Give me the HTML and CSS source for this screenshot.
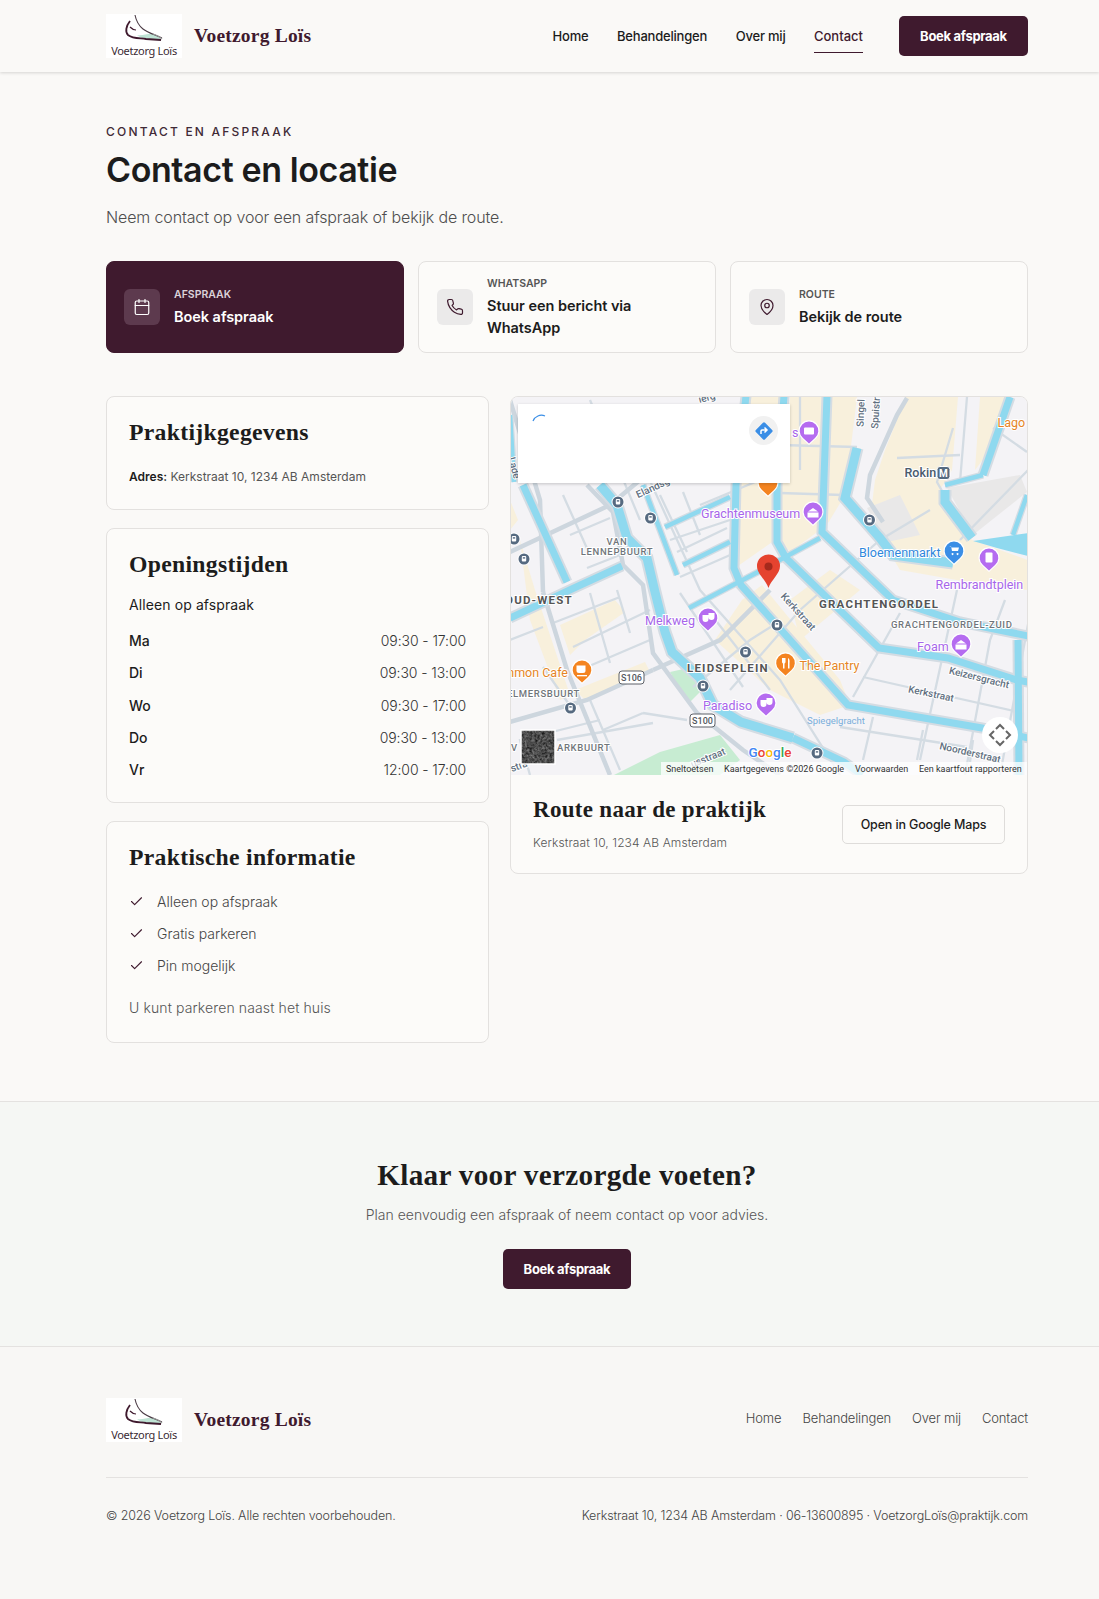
FILE: index.html
```html
<!DOCTYPE html>
<html lang="nl">
<head>
  <meta charset="UTF-8">
  <title>Contact - Voetzorg Loïs</title>
  <link rel="stylesheet" href="styles.css">
</head>
<body>

  <svg class="defs" width="0" height="0">
    <defs>
      <g id="logo-foot">
        <path d="M31 21C37 22 42 19 47 20C51 21 54 24 55 25C47 26 37 26 31 21Z" fill="#bfe3d4"/>
        <path d="M29 1C30 6 32 11 37 15C42 19 50 21 56 24" fill="none" stroke="#4a3a44" stroke-width="1.100"/>
        <path d="M24 7C20 12 19 18 22 21C27 25 34 24 40 25L55 26" fill="none" stroke="#3f1a2e" stroke-width="1.800"/>
        <path d="M24 13C26 15 28 16 30 16" fill="none" stroke="#3f1a2e" stroke-width="1.200"/>
        <path d="M47 20C51 21 54 23 56 25" fill="none" stroke="#999" stroke-width="1.200"/>
      </g>
      <g id="pin">
        <path d="M0 14L-7 7.500A10.500 10.500 0 1 1 7 7.500Z" fill="#fff"/>
        <path d="M0 12.500L-6 7A9.300 9.300 0 1 1 6 7Z" fill="currentColor"/>
      </g>
      <g id="stop">
        <circle r="6.500" fill="#fff"/>
        <circle r="5.500" fill="#566a80"/>
        <rect x="-2.200" y="-3" width="4.400" height="5.500" rx="1" fill="#fff"/>
        <rect x="-1.200" y="-1.800" width="2.400" height="1.400" fill="#566a80"/>
      </g>
      <g id="canals-wide">
        <path d="M827 396L822 532L893 600L960 622L1028 636"/>
        <path d="M784 396L777 485V542L786 558L879 648L948 658L1017 680L1028 682"/>
        <path d="M746 396L736 485L734 568L741 585L848 705L982 728L1028 738"/>
        <path d="M523 485L567 582"/>
        <path d="M510 618L574 588L622 566"/>
        <path d="M1018 640L1019 775"/>
        <path d="M793 738L844 762L862 775"/>
        <path d="M1010 397L983 475"/>
      </g>
      <g id="canals-broad">
        <path d="M600 485L617 505L627 538L647 558L655 592L665 632L672 652L700 678L713 705L741 722L793 738"/>
        <path d="M857 448L845 498L880 538L893 555L953 563"/>
        <path d="M945 490L945 502L972 538"/>
      </g>
      <g id="canals-thin">
        <path d="M510 415L514 482"/>
        <path d="M665 527L730 497"/>
        <path d="M683 565L730 542"/>
        <path d="M689 608L758 572L820 538"/>
        <path d="M643 485L677 575"/>
        <path d="M983 475L945 485"/>
        <path d="M1027 495L1013 535"/>
      </g>
      <filter id="sat-noise" x="0" y="0" width="100%" height="100%" color-interpolation-filters="sRGB">
        <feTurbulence type="fractalNoise" baseFrequency="0.4" numOctaves="2" seed="4"/>
        <feColorMatrix type="matrix" values="0.6 0 0 0 0  0.6 0 0 0 0  0.6 0 0 0 0  0 0 0 0 1"/>
      </filter>
    </defs>
  </svg>

  <!-- Header -->
  <header class="site-header">
    <div class="wrap header-row">
      <a class="brand" href="#">
        <span class="logo">
          <svg width="76" height="30" viewBox="0 0 76 30"><use href="#logo-foot"/></svg>
          <span class="logo-text">Voetzorg Loïs</span>
        </span>
        <span class="brand-name">Voetzorg Loïs</span>
      </a>
      <nav class="main-nav">
        <a href="#">Home</a>
        <a href="#">Behandelingen</a>
        <a href="#">Over mij</a>
        <a href="#" class="active">Contact</a>
      </nav>
      <a class="btn-primary" href="#">Boek afspraak</a>
    </div>
  </header>

  <!-- Main Content -->
  <main class="wrap page-main">
    <p class="eyebrow">CONTACT EN AFSPRAAK</p>
    <h1>Contact en locatie</h1>
    <p class="lead">Neem contact op voor een afspraak of bekijk de route.</p>

    <div class="actions">
      <a class="action action-dark" href="#">
        <span class="action-icon">
          <svg viewBox="0 0 24 24"><path d="M8 2v4"/><path d="M16 2v4"/><rect width="18" height="18" x="3" y="4" rx="2"/><path d="M3 10h18"/></svg>
        </span>
        <span class="action-text">
          <span class="action-label">AFSPRAAK</span>
          <span class="action-title">Boek afspraak</span>
        </span>
      </a>
      <a class="action" href="#">
        <span class="action-icon">
          <svg viewBox="0 0 24 24"><path d="M22 16.920v3a2 2 0 0 1-2.180 2 19.790 19.790 0 0 1-8.630-3.070 19.500 19.500 0 0 1-6-6 19.790 19.790 0 0 1-3.070-8.670A2 2 0 0 1 4.110 2h3a2 2 0 0 1 2 1.720 12.840 12.840 0 0 0 .7 2.810 2 2 0 0 1-.45 2.110L8.090 9.910a16 16 0 0 0 6 6l1.270-1.270a2 2 0 0 1 2.110-.45 12.840 12.840 0 0 0 2.810.7A2 2 0 0 1 22 16.920z"/></svg>
        </span>
        <span class="action-text">
          <span class="action-label">WHATSAPP</span>
          <span class="action-title">Stuur een bericht via WhatsApp</span>
        </span>
      </a>
      <a class="action" href="#">
        <span class="action-icon">
          <svg viewBox="0 0 24 24"><path d="M20 10c0 6-8 12-8 12s-8-6-8-12a8 8 0 0 1 16 0Z"/><circle cx="12" cy="10" r="3"/></svg>
        </span>
        <span class="action-text">
          <span class="action-label">ROUTE</span>
          <span class="action-title">Bekijk de route</span>
        </span>
      </a>
    </div>

    <div class="contact-grid">
      <div class="info-column">
        <section class="card">
          <h2>Praktijkgegevens</h2>
          <p class="address"><strong>Adres:</strong> Kerkstraat 10, 1234 AB Amsterdam</p>
        </section>

        <section class="card">
          <h2>Openingstijden</h2>
          <p class="hours-note">Alleen op afspraak</p>
          <ul class="hours">
            <li><span>Ma</span><span>09:30 - 17:00</span></li>
            <li><span>Di</span><span>09:30 - 13:00</span></li>
            <li><span>Wo</span><span>09:30 - 17:00</span></li>
            <li><span>Do</span><span>09:30 - 13:00</span></li>
            <li><span>Vr</span><span>12:00 - 17:00</span></li>
          </ul>
        </section>

        <section class="card card-last">
          <h2>Praktische informatie</h2>
          <ul class="checks">
            <li><svg viewBox="0 0 24 24"><path d="M20 6 9 17l-5-5"/></svg>Alleen op afspraak</li>
            <li><svg viewBox="0 0 24 24"><path d="M20 6 9 17l-5-5"/></svg>Gratis parkeren</li>
            <li><svg viewBox="0 0 24 24"><path d="M20 6 9 17l-5-5"/></svg>Pin mogelijk</li>
          </ul>
          <p class="parking-note">U kunt parkeren naast het huis</p>
        </section>
      </div>

      <section class="map-card">
        <div class="map">
          <svg class="map-canvas" width="518" height="379" viewBox="510 396 518 379">
            <rect x="510" y="396" width="518" height="379" fill="#f4f3f6"/>

            <!-- built up areas -->
            <g fill="#f8f0dc">
              <polygon points="748,396 782,396 775,486 775,540 738,566 738,486"/>
              <polygon points="790,396 824,396 820,530 790,552 780,540 782,486"/>
              <polygon points="830,397 857,397 845,495 825,528"/>
              <polygon points="893,430 905,397 958,397 952,470 940,490 948,510 972,540 1028,560 1028,590 985,585 900,570 870,520 875,480 885,450"/>
              <polygon points="742,600 762,585 840,680 850,705 820,715 770,690 715,640"/>
              <polygon points="790,600 830,570 860,590 800,640"/>
              <polygon points="520,540 535,590 570,695 560,700 530,620"/>
              <polygon points="560,625 615,600 625,612 585,640 570,655"/>
              <polygon points="575,690 645,662 650,672 585,700"/>
              <polygon points="980,397 1008,397 998,440 975,470"/>
              <polygon points="510,500 518,520 510,530"/>
            </g>
            <polygon points="867,508 900,495 920,535 887,542" fill="#e9e8e8"/>
            <polygon points="947,488 1020,475 1027,492 973,535" fill="#e9e8e8"/>

            <!-- parks -->
            <g fill="#c7ecd2">
              <polygon points="670,672 688,668 702,690 690,702 680,690"/>
              <polygon points="614,775 660,752 720,735 740,760 720,775"/>
            </g>

            <!-- roads -->
            <g fill="none" stroke="#d4dce3" stroke-width="2.300">
              <path d="M563 495L590 555M570 535L610 518M587 568L620 555"/>
              <path d="M660 495L687 552M683 492L700 535M677 552L727 528M680 577L737 552"/>
              <path d="M553 623L620 597M573 647L650 610M580 670L650 640M590 593L610 663M617 590L630 633"/>
              <path d="M510 640L543 627M543 667L573 710M643 713L687 720M603 730L643 713M557 740L653 723"/>
              <path d="M680 593L743 687M710 613L770 690M693 687L750 640L777 623"/>
              <path d="M900 613L853 697M957 590L920 760M863 677L1023 713M840 727L967 747"/>
              <path d="M873 717L863 760M923 730L917 760M973 740L970 762"/>
              <path d="M953 428L937 482L967 535M967 397L960 482M780 445L857 447M780 493L843 495"/>
              <path d="M897 458L960 455M993 428L1027 452M960 540L1028 470M1000 775L1040 560"/>
              <path d="M730 690L800 610L880 540L930 510M800 397L800 470"/>
              <path d="M590 400L640 520M645 470L700 590L780 680L840 775M700 505L760 480M670 540L730 520"/>
              <path d="M530 775L520 740L600 720M590 700L620 770M1005 600L990 640L965 775"/>
            </g>
            <g fill="none" stroke="#cdd6de" stroke-width="4.500">
              <path d="M510 722L587 700L653 670"/>
              <path d="M543 592L567 670L610 775"/>
              <path d="M510 400L540 500L543 592"/>
              <path d="M587 485L613 512L623 565L643 585L653 653L697 713L743 750L780 775"/>
              <path d="M510 552L610 505L640 480"/>
              <path d="M653 670L720 640L770 590"/>
              <path d="M907 398L897 415L870 475L867 498L883 522"/>
            </g>

            <!-- water, each canal has a road on both banks -->
            <g fill="none" stroke="#d4dce3">
              <use href="#canals-wide" stroke-width="11"/>
              <use href="#canals-broad" stroke-width="13"/>
              <use href="#canals-thin" stroke-width="7"/>
            </g>
            <g fill="none" stroke="#8fd9ef">
              <use href="#canals-wide" stroke-width="7"/>
              <use href="#canals-broad" stroke-width="9"/>
              <use href="#canals-thin" stroke-width="4.500"/>
            </g>
            <polygon points="973,541 1028,533 1028,556 997,548" fill="#8fd9ef"/>

            <!-- transit stops -->
            <use href="#stop" x="618" y="502"/>
            <use href="#stop" x="650.500" y="518"/>
            <use href="#stop" x="514" y="539"/>
            <use href="#stop" x="524" y="559"/>
            <use href="#stop" x="777" y="625"/>
            <use href="#stop" x="745.500" y="652"/>
            <use href="#stop" x="703" y="686"/>
            <use href="#stop" x="570.500" y="708"/>
            <use href="#stop" x="817" y="753"/>
            <use href="#stop" x="869.500" y="520"/>

            <!-- street names -->
            <g class="street">
              <text x="798" y="615" text-anchor="middle" transform="rotate(48 798 612)">Kerkstraat</text>
              <text x="931" y="697" text-anchor="middle" transform="rotate(12 931 694)">Kerkstraat</text>
              <text x="979" y="681" text-anchor="middle" transform="rotate(14 979 678)">Keizersgracht</text>
              <text x="970" y="756" text-anchor="middle" transform="rotate(13 970 753)">Noorderstraat</text>
              <text x="653" y="491" text-anchor="middle" transform="rotate(-25 653 488)">Elandsg</text>
              <text x="861" y="416" text-anchor="middle" transform="rotate(-88 861 413)">Singel</text>
              <text x="876" y="416" text-anchor="middle" transform="rotate(-86 876 413)">Spuistr</text>
              <text x="514" y="471" text-anchor="middle" transform="rotate(75 514 468)">Lade</text>
              <text x="707" y="401" text-anchor="middle" transform="rotate(-15 707 398)">ierg</text>
              <text x="708" y="761" text-anchor="middle" transform="rotate(-22 708 758)">usstraat</text>
              <text x="512" y="772" transform="rotate(-20 512 772)">stra</text>
            </g>
            <text class="water-name" x="836" y="724" text-anchor="middle">Spiegelgracht</text>

            <!-- district names -->
            <g class="district">
              <text x="617" y="545" text-anchor="middle">VAN</text>
              <text x="617" y="555" text-anchor="middle">LENNEPBUURT</text>
              <text x="891" y="627.500">GRACHTENGORDEL-ZUID</text>
              <text x="507" y="696.500">ELMERSBUURT</text>
              <text x="557" y="750.500">ARKBUURT</text>
              <text x="511" y="750.500">V</text>
            </g>
            <g class="district-big">
              <text x="505" y="604">OUD-WEST</text>
              <text x="819" y="608">GRACHTENGORDEL</text>
              <text x="687" y="672">LEIDSEPLEIN</text>
            </g>

            <!-- places -->
            <g class="place purple">
              <text x="701" y="518">Grachtenmuseum</text>
              <text x="935.500" y="588.500">Rembrandtplein</text>
              <text x="645" y="625">Melkweg</text>
              <text x="917" y="650.500">Foam</text>
              <text x="703" y="709.500">Paradiso</text>
              <text x="792" y="437">s</text>
            </g>
            <g class="place blue"><text x="859" y="556.500">Bloemenmarkt</text></g>
            <g class="place orange">
              <text x="799.500" y="669.500">The Pantry</text>
              <text x="568" y="676.500" text-anchor="end">nmon Cafe</text>
              <text x="997.500" y="427">Lago</text>
            </g>
            <text class="place dark" x="904.500" y="476.500">Rokin</text>

            <!-- pins -->
            <g color="#b56cf0">
              <use href="#pin" x="809" y="431"/>
              <use href="#pin" x="813" y="512"/>
              <use href="#pin" x="989" y="558"/>
              <use href="#pin" x="708" y="618"/>
              <use href="#pin" x="961" y="644"/>
              <use href="#pin" x="766" y="703"/>
            </g>
            <g color="#f48420">
              <use href="#pin" x="768" y="483"/>
              <use href="#pin" x="785.500" y="663"/>
              <use href="#pin" x="582" y="670"/>
            </g>
            <use href="#pin" x="954" y="551" color="#3a8ee6"/>

            <!-- pin glyphs -->
            <g fill="#fff">
              <rect x="804" y="427.500" width="10" height="7" rx="1"/>
              <path d="M807.500 512.500h11v5h-11zM808 511.500l5-3.500 5 3.500z"/>
              <rect x="985.500" y="552.500" width="7" height="10" rx="1"/>
              <path d="M702.500 615h6v4a3 3 0 0 1-6 0zM708.500 613h6v4a3 3 0 0 1-6 0z"/>
              <path d="M955.500 644.500h11v5h-11zM956 643.500l5-3.500 5 3.500z"/>
              <path d="M760.500 700h6v4a3 3 0 0 1-6 0zM766.500 698h6v4a3 3 0 0 1-6 0z"/>
              <path d="M782 658v4a2 2 0 0 0 1 1.500v5h1.500v-5a2 2 0 0 0 1-1.500v-4zM788 658a2 4 0 0 1 1.500 5v5.500h-1.500z"/>
              <path d="M576.500 665.500h9v5a2.500 2.500 0 0 1-2.500 2.500h-4a2.500 2.500 0 0 1-2.500-2.500z"/>
              <rect x="577" y="675" width="10" height="1.300"/>
              <path d="M949 546h2l1 5h6l1-3.500h-7.500l-.3-1zM952.500 553a1 1 0 1 0 .1 0zM957.500 553a1 1 0 1 0 .1 0z"/>
            </g>
            <rect x="937" y="466.500" width="13" height="13" rx="3" fill="#566a80" stroke="#fff"/>
            <text class="metro" x="943.500" y="476.500" text-anchor="middle">M</text>

            <!-- road shields -->
            <g class="shield">
              <rect x="619" y="671" width="25" height="13" rx="3"/>
              <text x="631.500" y="681" text-anchor="middle">S106</text>
              <rect x="690" y="714" width="25" height="13" rx="3"/>
              <text x="702.500" y="724" text-anchor="middle">S100</text>
            </g>

            <!-- marker -->
            <path d="M768.500 588C766 580 757 574 757 566A11.500 11.500 0 0 1 780 566C780 574 771 580 768.500 588Z" fill="#e5432f"/>
            <circle cx="768.500" cy="566.500" r="4" fill="#a52a1c"/>

            <text class="google" x="748.500" y="756.500"><tspan fill="#4285f4">G</tspan><tspan fill="#ea4335">o</tspan><tspan fill="#fbbc05">o</tspan><tspan fill="#4285f4">g</tspan><tspan fill="#34a853">l</tspan><tspan fill="#ea4335">e</tspan></text>

            <!-- satellite thumb -->
            <rect x="521" y="730" width="34" height="34" filter="url(#sat-noise)"/>
            <rect x="521" y="730" width="34" height="34" fill="none" stroke="#fff" stroke-width="1.500"/>

            <!-- pan control -->
            <circle cx="1000" cy="735" r="18" fill="#fff"/>
            <path d="M996 729L1000 725L1004 729M996 741L1000 745L1004 741M994 731L990 735L994 739M1006 731L1010 735L1006 739" fill="none" stroke="#666" stroke-width="2"/>

            <!-- attribution -->
            <rect x="661" y="762" width="367" height="13" fill="#fff" fill-opacity="0.75"/>
            <g class="attribution">
              <text x="666" y="772">Sneltoetsen</text>
              <text x="724" y="772">Kaartgegevens ©2026 Google</text>
              <text x="855" y="772">Voorwaarden</text>
              <text x="919" y="772">Een kaartfout rapporteren</text>
            </g>
          </svg>

          <div class="map-panel">
            <svg class="panel-spinner" width="14" height="8" viewBox="0 0 14 8"><path d="M1 7A9 9 0 0 1 13 2" fill="none" stroke="#3a8ee6" stroke-width="1.200"/></svg>
            <span class="panel-route">
              <svg width="20" height="20" viewBox="0 0 20 20"><rect x="3.500" y="3.500" width="13" height="13" rx="1.500" transform="rotate(45 10 10)" fill="#3a8ee6"/><path d="M7 13V10a1 1 0 0 1 1-1H13M10.500 6.500L13 9L10.500 11.500" fill="none" stroke="#fff" stroke-width="1.500"/></svg>
            </span>
          </div>
        </div>

        <div class="route-row">
          <div>
            <h2>Route naar de praktijk</h2>
            <p class="route-address">Kerkstraat 10, 1234 AB Amsterdam</p>
          </div>
          <a class="btn-outline" href="#">Open in Google Maps</a>
        </div>
      </section>
    </div>
  </main>

  <!-- Call to action -->
  <section class="cta">
    <div class="wrap cta-inner">
      <h2>Klaar voor verzorgde voeten?</h2>
      <p>Plan eenvoudig een afspraak of neem contact op voor advies.</p>
      <a class="btn-primary" href="#">Boek afspraak</a>
    </div>
  </section>

  <!-- Footer -->
  <footer class="site-footer">
    <div class="wrap">
      <div class="footer-top">
        <a class="brand" href="#">
          <span class="logo">
            <svg width="76" height="30" viewBox="0 0 76 30"><use href="#logo-foot"/></svg>
            <span class="logo-text">Voetzorg Loïs</span>
          </span>
          <span class="brand-name">Voetzorg Loïs</span>
        </a>
        <nav class="footer-nav">
          <a href="#">Home</a>
          <a href="#">Behandelingen</a>
          <a href="#">Over mij</a>
          <a href="#">Contact</a>
        </nav>
      </div>
      <div class="footer-bottom">
        <span>© 2026 Voetzorg Loïs. Alle rechten voorbehouden.</span>
        <span>Kerkstraat 10, 1234 AB Amsterdam · 06-13600895 · VoetzorgLoïs@praktijk.com</span>
      </div>
    </div>
  </footer>

</body>
</html>
```

FILE: styles.css
```css
/* Basic Reset */
* {
  margin: 0;
  padding: 0;
  box-sizing: border-box;
}

body {
  font-family: Inter, "Noto Sans", sans-serif;
  background-color: #faf9f7;
  color: #1c1c1c;
  font-size: 14px;
  overflow-x: hidden;
}

a {
  color: inherit;
  text-decoration: none;
}

ul {
  list-style: none;
}

.defs {
  position: absolute;
}

/* The page column sits a little right of centre in the window */
.wrap {
  width: 922px;
  margin-left: 106px;
}

h2 {
  font-family: "Liberation Serif", serif;
  font-weight: 700;
  font-size: 23.700px;
  line-height: 28px;
  letter-spacing: 0.3px;
  color: #1c1c1c;
}

/* Header */
.site-header {
  height: 72px;
  background-color: #faf9f7;
  box-shadow: 0 1px 3px rgba(0, 0, 0, 0.15);
}

.header-row {
  height: 72px;
  display: flex;
  align-items: center;
}

.brand {
  display: flex;
  align-items: center;
  gap: 12px;
}

.logo {
  width: 76px;
  height: 44px;
  background-color: #fff;
  display: flex;
  flex-direction: column;
  align-items: center;
  overflow: hidden;
}

.logo svg {
  flex: none;
  width: 76px;
  height: 30px;
}

.logo-text {
  font-family: "Noto Sans", sans-serif;
  font-size: 11px;
  line-height: 14px;
  letter-spacing: -0.3px;
  color: #3a2a33;
  white-space: nowrap;
}

.brand-name {
  font-family: "Liberation Serif", serif;
  font-weight: 700;
  font-size: 19.500px;
  letter-spacing: 0.2px;
  color: #3f1a2e;
}

.main-nav {
  margin-left: auto;
  display: flex;
  gap: 28.500px;
  font-size: 13px;
  font-weight: 500;
  letter-spacing: -0.2px;
}

.main-nav a {
  position: relative;
  line-height: 20px;
}

.main-nav a.active::after {
  content: '';
  position: absolute;
  left: 0;
  right: 0;
  bottom: -7px;
  height: 1px;
  background-color: #3f1a2e;
}

.main-nav a.active {
  color: #3f1a2e;
  letter-spacing: 0;
}

.btn-primary {
  display: inline-flex;
  align-items: center;
  justify-content: center;
  width: 129px;
  height: 40px;
  margin-left: 36px;
  background-color: #3f1a2e;
  color: #fff;
  border-radius: 5px;
  font-size: 13px;
  font-weight: 700;
  letter-spacing: -0.3px;
}

/* Page heading */
.page-main {
  padding-top: 52px;
  padding-bottom: 58px;
}

.eyebrow {
  font-size: 12px;
  line-height: 16px;
  font-weight: 500;
  letter-spacing: 2.200px;
  color: #3f2a36;
}

h1 {
  margin-top: 10px;
  font-size: 34px;
  line-height: 40px;
  font-weight: 600;
  letter-spacing: -0.4px;
  color: #1c1c1c;
}

.lead {
  margin-top: 15px;
  font-size: 16px;
  line-height: 24px;
  font-weight: 300;
  letter-spacing: -0.13px;
  color: #4e4e4e;
}

/* Action cards */
.actions {
  margin-top: 32px;
  display: grid;
  grid-template-columns: repeat(3, 298px);
  gap: 14px;
}

.action {
  height: 92px;
  display: flex;
  align-items: center;
  gap: 14px;
  padding: 0 18px;
  background-color: #fcfbf9;
  border: 1px solid #e3e1df;
  border-radius: 8px;
}

.action-dark {
  background-color: #3f1a2e;
  border-color: #3f1a2e;
  color: #fff;
  padding-left: 17px;
}

.action-icon {
  flex: none;
  width: 36px;
  height: 36px;
  border-radius: 6px;
  background-color: #ebeaea;
  display: flex;
  align-items: center;
  justify-content: center;
}

.action-dark .action-icon {
  background-color: #5d3a4e;
}

.action-icon svg {
  width: 18px;
  height: 18px;
  fill: none;
  stroke: #3f1a2e;
  stroke-width: 1.600;
  stroke-linecap: round;
  stroke-linejoin: round;
}

.action-dark .action-icon svg {
  stroke: #fff;
}

.action-text {
  display: flex;
  flex-direction: column;
  padding-bottom: 3px;
}

.action-label {
  font-size: 10.500px;
  line-height: 22px;
  font-weight: 600;
  color: #555;
}

.action-dark .action-label {
  color: #dcd3d9;
}

.action-title {
  font-size: 14.500px;
  line-height: 22px;
  font-weight: 600;
  letter-spacing: -0.05px;
  max-width: 190px;
}

/* Two column contact block */
.contact-grid {
  margin-top: 43px;
  display: grid;
  grid-template-columns: 383px 518px;
  gap: 21px;
  align-items: start;
}

.info-column {
  display: flex;
  flex-direction: column;
  gap: 18px;
}

.card {
  background-color: #fcfbf9;
  border: 1px solid #e3e1df;
  border-radius: 8px;
  padding: 21px 22px 22px;
}

.card-last {
  padding-bottom: 23px;
}

.address {
  margin-top: 21px;
  font-size: 12px;
  line-height: 20px;
  color: #555;
}

.address strong {
  font-weight: 600;
  color: #1c1c1c;
}

.hours-note {
  margin-top: 16px;
  line-height: 22px;
  font-weight: 400;
  letter-spacing: 0.1px;
}

.hours {
  margin-top: 14px;
  margin-bottom: -1px;
  display: flex;
  flex-direction: column;
  gap: 10.300px;
}

.hours li {
  display: flex;
  justify-content: space-between;
  line-height: 22px;
}

.hours li span:first-child {
  font-weight: 500;
}

.hours li span:last-child {
  color: #333;
  font-weight: 300;
  letter-spacing: -0.1px;
}

.checks {
  margin-top: 19.500px;
  display: flex;
  flex-direction: column;
  gap: 10px;
}

.checks li {
  display: flex;
  align-items: center;
  gap: 13px;
  line-height: 22px;
  color: #444;
  font-weight: 300;
}

.checks svg {
  width: 15px;
  height: 15px;
  fill: none;
  stroke: #3f1a2e;
  stroke-width: 1.800;
  stroke-linecap: round;
  stroke-linejoin: round;
}

.parking-note {
  margin-top: 20px;
  line-height: 22px;
  color: #555;
  font-weight: 300;
  letter-spacing: 0.12px;
}

/* Map card */
.map-card {
  background-color: #fcfbf9;
  border: 1px solid #e3e1df;
  border-radius: 8px;
  overflow: hidden;
}

.map {
  position: relative;
  height: 378px;
}

.map-canvas {
  display: block;
  margin: -1px 0 0 -1px;
}

.map-panel {
  position: absolute;
  left: 7px;
  top: 8px;
  width: 272px;
  height: 79px;
  background-color: #fff;
  box-shadow: 0 1px 3px rgba(0, 0, 0, 0.2);
}

.panel-spinner {
  position: absolute;
  left: 14px;
  top: 10px;
}

.panel-route {
  position: absolute;
  right: 12px;
  top: 12px;
  width: 29px;
  height: 29px;
  border-radius: 50%;
  background-color: #f1f1f1;
  display: flex;
  align-items: center;
  justify-content: center;
}

/* text on the map */
.map-canvas text {
  font-family: Roboto, sans-serif;
}

.street text {
  font-size: 10px;
  font-weight: 500;
  fill: #5f6f80;
  stroke: #fff;
  stroke-width: 2px;
  paint-order: stroke;
}

.water-name {
  font-size: 9.500px;
  fill: #79aedb;
}

.district text {
  font-size: 9.500px;
  font-weight: 500;
  letter-spacing: 0.65px;
  fill: #70757a;
  stroke: #fff;
  stroke-width: 2px;
  paint-order: stroke;
}

.district-big text {
  font-size: 11.500px;
  font-weight: 700;
  letter-spacing: 1.200px;
  fill: #555;
  stroke: #fff;
  stroke-width: 2px;
  paint-order: stroke;
}

.place text, text.place {
  font-size: 12.500px;
  stroke: #fff;
  stroke-width: 2px;
  paint-order: stroke;
}

.purple text {
  fill: #a765ea;
}

.blue text {
  fill: #2f86dc;
}

.orange text {
  fill: #e58525;
}

text.dark {
  fill: #4a5a6c;
  font-weight: 500;
}

.metro {
  font-size: 10px;
  font-weight: 700;
  fill: #fff;
}

.shield rect {
  fill: #fff;
  stroke: #5d6168;
  stroke-width: 1;
}

.shield text {
  font-size: 9px;
  font-weight: 500;
  fill: #55595f;
}

.google {
  font-size: 13.500px;
  font-weight: 500;
  stroke: #fff;
  stroke-width: 2px;
  paint-order: stroke;
}

.attribution text {
  font-size: 9px;
  fill: #333;
}

.route-row {
  height: 99px;
  display: flex;
  justify-content: space-between;
  align-items: flex-start;
  padding: 21px 22px 0 22px;
  border-top: 1px solid #e3e1df;
}

.route-row h2 {
  font-size: 23px;
}

.route-address {
  margin-top: 10px;
  font-size: 12px;
  line-height: 18px;
  font-weight: 300;
  letter-spacing: 0.1px;
  color: #555;
}

.btn-outline {
  margin-top: 9px;
  width: 163px;
  height: 39px;
  display: flex;
  align-items: center;
  justify-content: center;
  background-color: #fcfbf9;
  border: 1px solid #dedcda;
  border-radius: 5px;
  font-size: 12.500px;
  font-weight: 500;
  letter-spacing: -0.15px;
}

/* Call to action */
.cta {
  background-color: #f5f7f4;
  border-top: 1px solid #e4e2e0;
  border-bottom: 1px solid #e4e2e0;
  height: 246px;
  padding-top: 55px;
}

.cta-inner {
  display: flex;
  flex-direction: column;
  align-items: center;
}

.cta h2 {
  font-size: 29.200px;
  line-height: 36px;
}

.cta p {
  margin-top: 10px;
  font-size: 14px;
  line-height: 24px;
  font-weight: 300;
  color: #555;
}

.cta .btn-primary {
  margin-top: 22px;
  margin-left: 0;
  width: 128px;
}

/* Footer */
.site-footer {
  background-color: #f8f7f5;
  padding-top: 51px;
  padding-bottom: 75px;
}

.footer-top {
  display: flex;
  justify-content: space-between;
  align-items: center;
  padding-bottom: 35px;
  border-bottom: 1px solid #e4e2e0;
}

.footer-nav {
  display: flex;
  gap: 21px;
  margin-bottom: 4px;
  font-size: 13px;
  font-weight: 300;
  letter-spacing: -0.15px;
  color: #444;
}

.footer-bottom {
  padding-top: 29px;
  display: flex;
  justify-content: space-between;
  font-size: 12.500px;
  line-height: 18px;
  font-weight: 300;
  letter-spacing: -0.15px;
  color: #444;
}
```
